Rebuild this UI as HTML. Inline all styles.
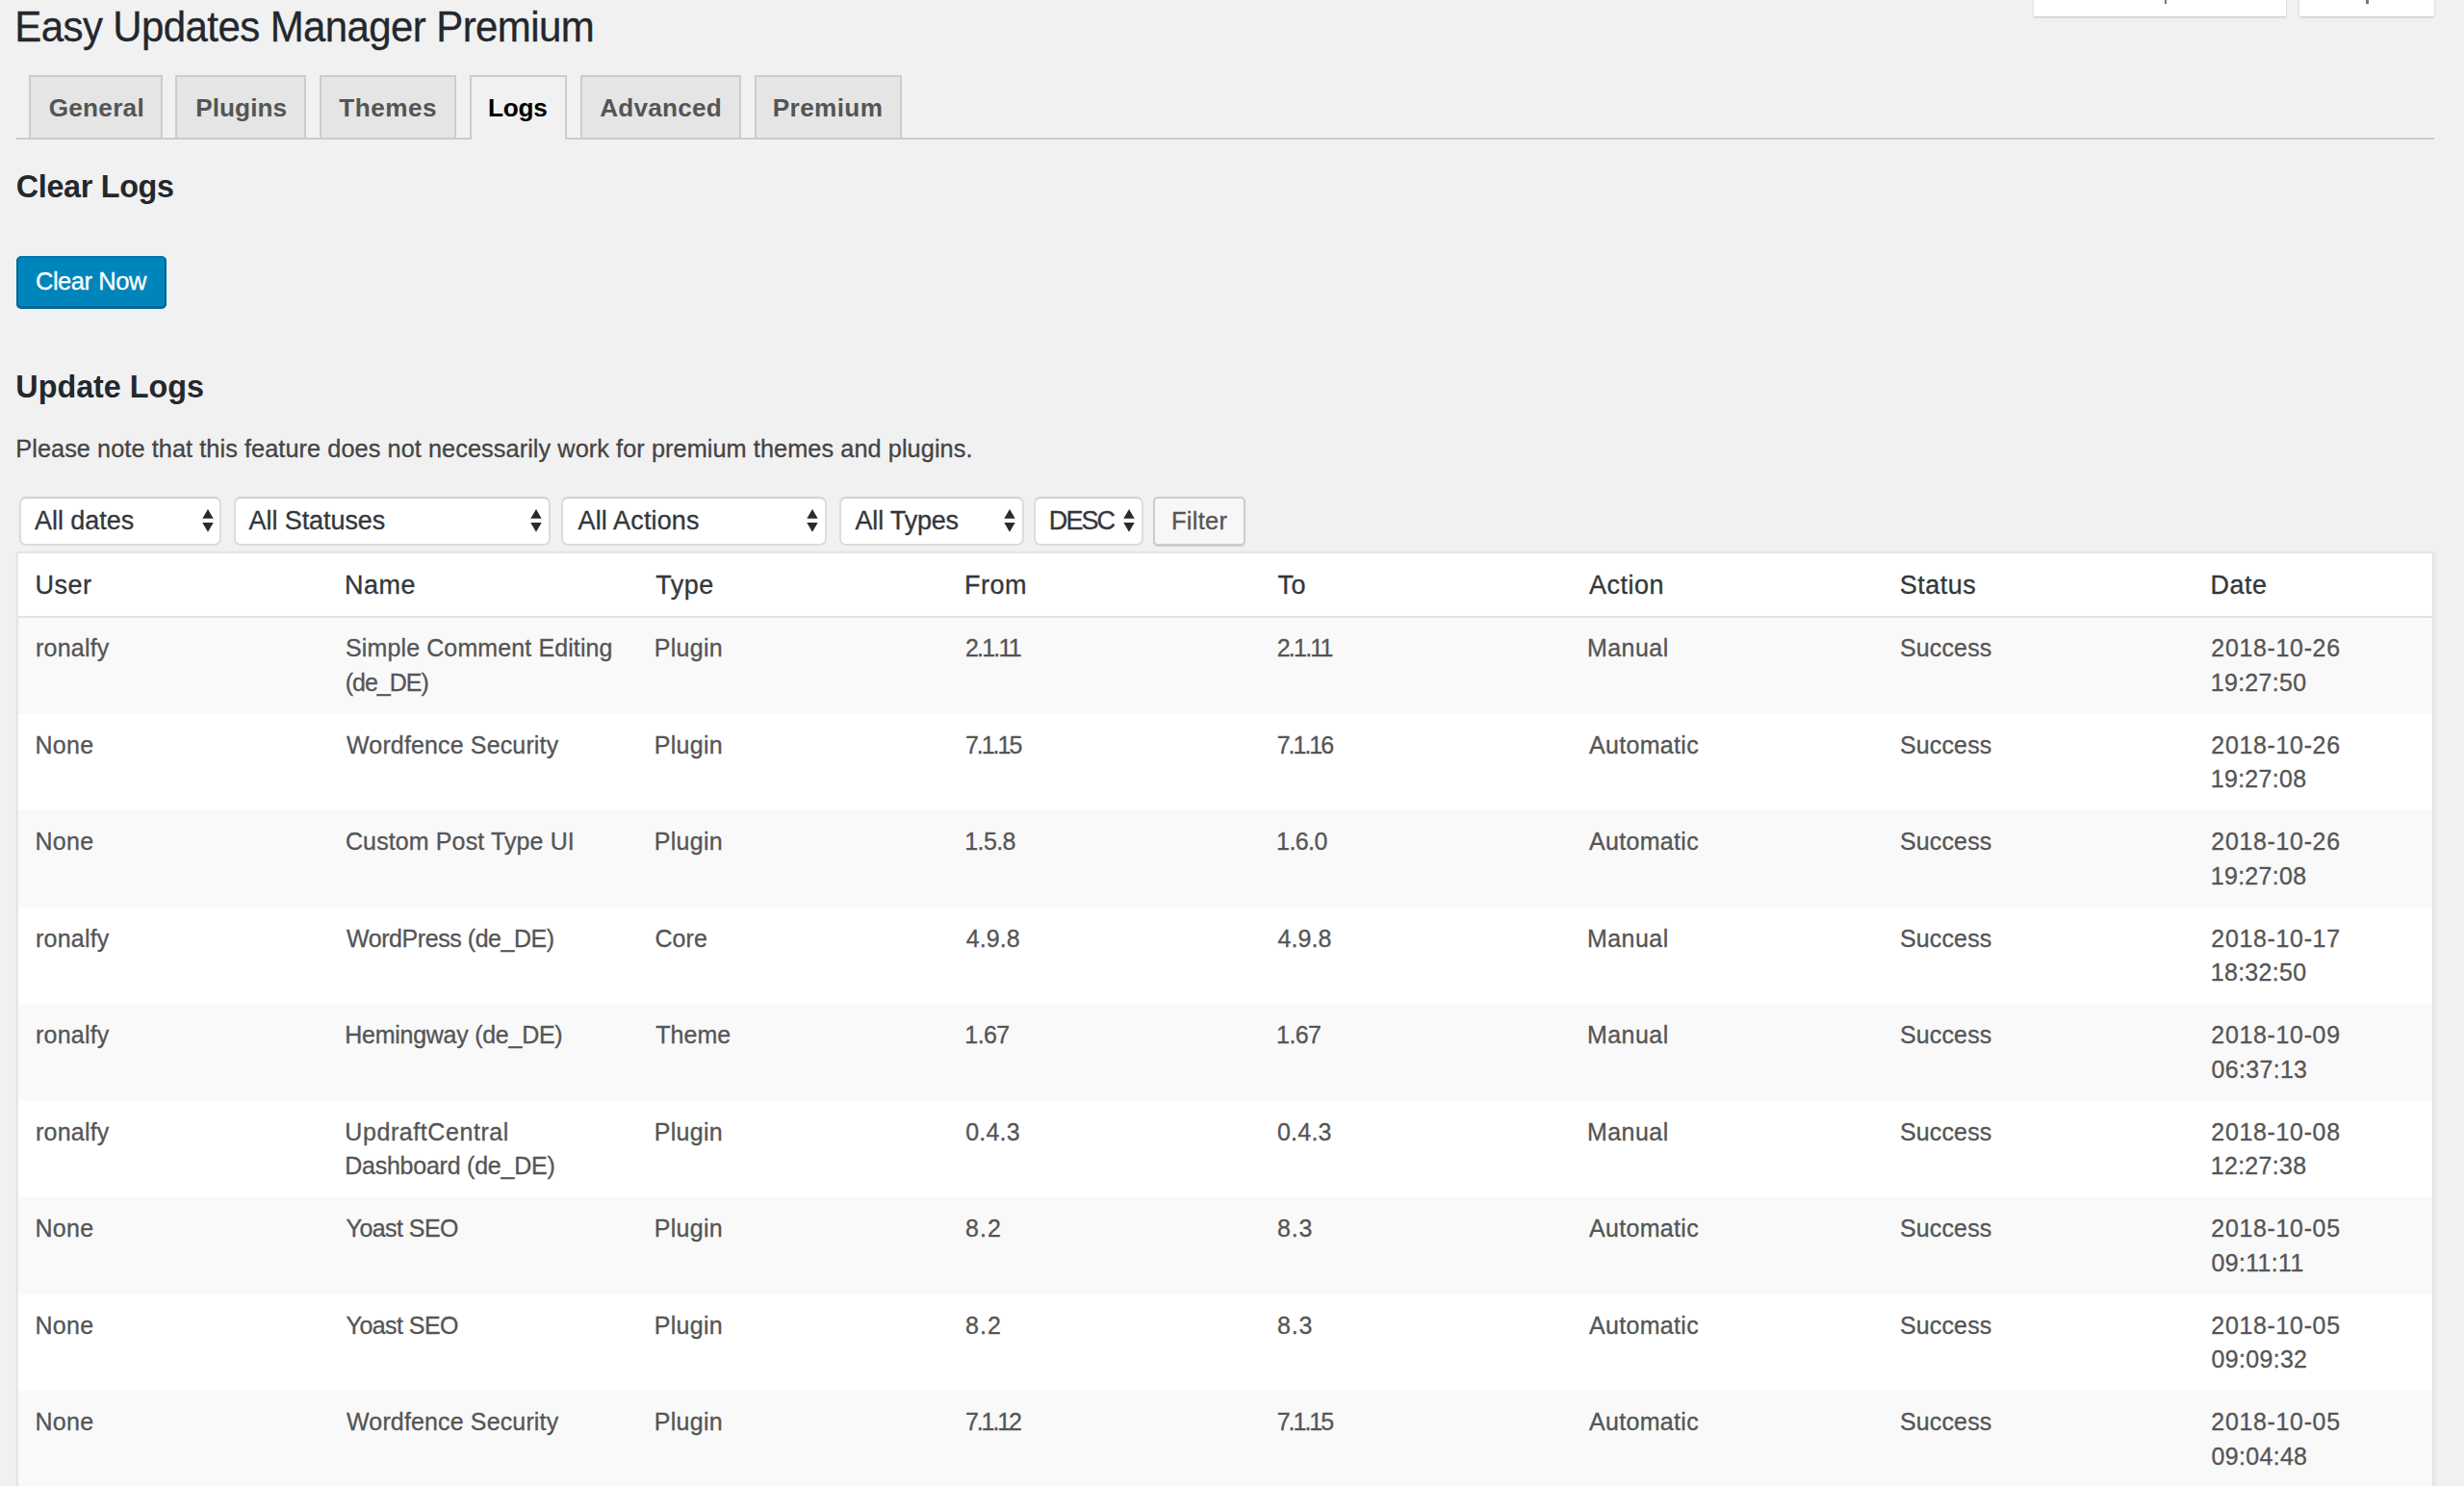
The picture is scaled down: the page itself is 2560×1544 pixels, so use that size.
<!DOCTYPE html>
<html><head><meta charset="utf-8"><title>Easy Updates Manager Premium</title>
<style>
*{margin:0;padding:0;box-sizing:border-box}
html,body{width:2560px;height:1544px;overflow:hidden;background:#f1f1f1;font-family:"Liberation Sans",sans-serif;position:relative}
.t{position:absolute;white-space:nowrap;-webkit-text-stroke:0.3px currentColor}
.b{position:absolute}
.arr{position:absolute}
.meta{position:absolute;top:-20px;height:37px;background:#fff;box-shadow:0 1px 2px rgba(0,0,0,.2)}
.navline{position:absolute;left:16.5px;top:143px;width:2512px;height:2px;background:#ccc}
.tab{position:absolute;top:78px;height:65px;border:2px solid #ccc;border-bottom:none;background:#e5e5e5}
.tab.active{background:#f1f1f1;height:67px}
.btn{position:absolute;left:17px;top:266px;width:156px;height:54px;background:#0085ba;border:2px solid #0073aa;border-color:#0073aa #006799 #006799;border-radius:5px;box-shadow:0 1px 0 #006799}
.sel{position:absolute;top:516px;height:50.5px;background:#fff;border:2px solid #dcdcdc;border-top-color:#d2d2d2;border-radius:7px;box-shadow:inset 0 1px 1px rgba(0,0,0,.04)}
.fbtn{position:absolute;left:1198px;top:516px;width:96px;height:51px;background:#f7f7f7;border:2px solid #ccc;border-radius:5px;box-shadow:0 1px 0 #ccc}
.table{position:absolute;left:16.5px;top:573px;width:2512px;height:1000px;background:#fff;border:2px solid #e5e5e5;box-shadow:0 1px 2px rgba(0,0,0,.04),2px 0 5px rgba(0,0,0,.035)}
.hdrline{position:absolute;left:18.5px;top:639.5px;width:2508px;height:2px;background:#e1e1e1}
.stripe{position:absolute;left:18.5px;width:2508px;background:#f9f9f9}
</style></head><body>

<div class="meta" style="left:2112.5px;width:262px"></div>
<div class="meta" style="left:2388.5px;width:140px"></div>
<div class="b" style="left:2248.5px;top:0;width:2.5px;height:4px;background:#777"></div>
<div class="b" style="left:2458px;top:0;width:2.5px;height:4px;background:#777"></div>
<div class="t" style="left:15.34px;top:0.65px;font-size:42px;line-height:55px;color:#23282d;letter-spacing:-0.603px;transform:scaleY(1.06);transform-origin:0 42px;">Easy Updates Manager Premium</div>
<div class="navline"></div>
<div class="tab" style="left:30.0px;width:139.0px"></div>
<div class="t" style="left:50.65px;top:94.72px;font-size:26.2px;line-height:34px;color:#555;font-weight:bold;-webkit-text-stroke:0;letter-spacing:0.248px;">General</div>
<div class="tab" style="left:182.0px;width:136.0px"></div>
<div class="t" style="left:203.20px;top:94.72px;font-size:26.2px;line-height:34px;color:#555;font-weight:bold;-webkit-text-stroke:0;letter-spacing:0.062px;">Plugins</div>
<div class="tab" style="left:331.6px;width:142.1px"></div>
<div class="t" style="left:352.34px;top:94.72px;font-size:26.2px;line-height:34px;color:#555;font-weight:bold;-webkit-text-stroke:0;letter-spacing:0.475px;">Themes</div>
<div class="tab active" style="left:488.0px;width:101.0px"></div>
<div class="t" style="left:507.00px;top:94.72px;font-size:26.2px;line-height:34px;color:#000;font-weight:bold;-webkit-text-stroke:0;letter-spacing:-0.256px;">Logs</div>
<div class="tab" style="left:603.4px;width:166.3px"></div>
<div class="t" style="left:623.25px;top:94.72px;font-size:26.2px;line-height:34px;color:#555;font-weight:bold;-webkit-text-stroke:0;letter-spacing:0.203px;">Advanced</div>
<div class="tab" style="left:783.6px;width:153.4px"></div>
<div class="t" style="left:802.80px;top:94.72px;font-size:26.2px;line-height:34px;color:#555;font-weight:bold;-webkit-text-stroke:0;letter-spacing:0.356px;">Premium</div>
<div class="t" style="left:16.71px;top:172.51px;font-size:32.3px;line-height:42px;color:#23282d;font-weight:bold;-webkit-text-stroke:0;letter-spacing:-0.294px;">Clear Logs</div>
<div class="btn"></div>
<div class="t" style="left:36.93px;top:275.76px;font-size:25.5px;line-height:33px;color:#fff;letter-spacing:-0.451px;">Clear Now</div>
<div class="t" style="left:16.36px;top:380.81px;font-size:32.3px;line-height:42px;color:#23282d;font-weight:bold;-webkit-text-stroke:0;">Update Logs</div>
<div class="t" style="left:16.28px;top:450.23px;font-size:25.3px;line-height:33px;color:#444;letter-spacing:0.066px;">Please note that this feature does not necessarily work for premium themes and plugins.</div>
<div class="sel" style="left:20.0px;width:210.4px"></div>
<div class="t" style="left:36.00px;top:523.74px;font-size:27px;line-height:35px;color:#32373c;letter-spacing:-0.037px;">All dates</div>
<svg class="arr" style="left:209.7px;top:528px" width="12" height="26" viewBox="0 0 12 26"><path d="M6 1.1 L11.7 10.7 L0.3 10.7 Z M0.3 15.1 L11.7 15.1 L6 24.8 Z" fill="#2a2a2a"/></svg>
<div class="sel" style="left:242.8px;width:329.7px"></div>
<div class="t" style="left:258.60px;top:523.74px;font-size:27px;line-height:35px;color:#32373c;letter-spacing:-0.083px;">All Statuses</div>
<svg class="arr" style="left:551.4px;top:528px" width="12" height="26" viewBox="0 0 12 26"><path d="M6 1.1 L11.7 10.7 L0.3 10.7 Z M0.3 15.1 L11.7 15.1 L6 24.8 Z" fill="#2a2a2a"/></svg>
<div class="sel" style="left:583.3px;width:275.7px"></div>
<div class="t" style="left:600.50px;top:523.74px;font-size:27px;line-height:35px;color:#32373c;letter-spacing:0.144px;">All Actions</div>
<svg class="arr" style="left:838.4px;top:528px" width="12" height="26" viewBox="0 0 12 26"><path d="M6 1.1 L11.7 10.7 L0.3 10.7 Z M0.3 15.1 L11.7 15.1 L6 24.8 Z" fill="#2a2a2a"/></svg>
<div class="sel" style="left:871.6px;width:192.1px"></div>
<div class="t" style="left:888.50px;top:523.74px;font-size:27px;line-height:35px;color:#32373c;letter-spacing:-0.179px;">All Types</div>
<svg class="arr" style="left:1042.9px;top:528px" width="12" height="26" viewBox="0 0 12 26"><path d="M6 1.1 L11.7 10.7 L0.3 10.7 Z M0.3 15.1 L11.7 15.1 L6 24.8 Z" fill="#2a2a2a"/></svg>
<div class="sel" style="left:1074.3px;width:113.9px"></div>
<div class="t" style="left:1089.84px;top:523.74px;font-size:27px;line-height:35px;color:#32373c;letter-spacing:-1.907px;">DESC</div>
<svg class="arr" style="left:1167.4px;top:528px" width="12" height="26" viewBox="0 0 12 26"><path d="M6 1.1 L11.7 10.7 L0.3 10.7 Z M0.3 15.1 L11.7 15.1 L6 24.8 Z" fill="#2a2a2a"/></svg>
<div class="fbtn"></div>
<div class="t" style="left:1216.96px;top:524.86px;font-size:25.5px;line-height:33px;color:#555;letter-spacing:0.283px;">Filter</div>
<div class="table"></div>
<div class="stripe" style="top:641.0px;height:100.5px"></div>
<div class="stripe" style="top:842.0px;height:100.5px"></div>
<div class="stripe" style="top:1043.0px;height:100.5px"></div>
<div class="stripe" style="top:1244.0px;height:100.5px"></div>
<div class="stripe" style="top:1445.0px;height:100.5px"></div>
<div class="hdrline"></div>
<div class="t" style="left:36.58px;top:590.84px;font-size:27px;line-height:35px;color:#32373c;letter-spacing:0.500px;">User</div>
<div class="t" style="left:358.04px;top:590.84px;font-size:27px;line-height:35px;color:#32373c;letter-spacing:0.500px;">Name</div>
<div class="t" style="left:681.26px;top:590.84px;font-size:27px;line-height:35px;color:#32373c;letter-spacing:0.500px;">Type</div>
<div class="t" style="left:1002.04px;top:590.84px;font-size:27px;line-height:35px;color:#32373c;letter-spacing:0.500px;">From</div>
<div class="t" style="left:1327.46px;top:590.84px;font-size:27px;line-height:35px;color:#32373c;letter-spacing:0.500px;">To</div>
<div class="t" style="left:1651.00px;top:590.84px;font-size:27px;line-height:35px;color:#32373c;letter-spacing:0.500px;">Action</div>
<div class="t" style="left:1973.79px;top:590.84px;font-size:27px;line-height:35px;color:#32373c;letter-spacing:0.500px;">Status</div>
<div class="t" style="left:2296.44px;top:590.84px;font-size:27px;line-height:35px;color:#32373c;letter-spacing:0.500px;">Date</div>
<div class="t" style="left:36.98px;top:656.39px;font-size:25px;line-height:35.5px;color:#555;letter-spacing:0.221px;">ronalfy</div>
<div class="t" style="left:359.07px;top:656.39px;font-size:25px;line-height:35.5px;color:#555;letter-spacing:0.111px;">Simple Comment Editing</div>
<div class="t" style="left:358.70px;top:691.69px;font-size:25px;line-height:35.5px;color:#555;letter-spacing:-1.000px;">(de_DE)</div>
<div class="t" style="left:679.80px;top:656.39px;font-size:25px;line-height:35.5px;color:#555;letter-spacing:0.265px;">Plugin</div>
<div class="t" style="left:1002.95px;top:656.39px;font-size:25px;line-height:35.5px;color:#555;letter-spacing:-1.790px;">2.1.11</div>
<div class="t" style="left:1326.75px;top:656.39px;font-size:25px;line-height:35.5px;color:#555;letter-spacing:-1.790px;">2.1.11</div>
<div class="t" style="left:1649.00px;top:656.39px;font-size:25px;line-height:35.5px;color:#555;letter-spacing:0.445px;">Manual</div>
<div class="t" style="left:1973.88px;top:656.39px;font-size:25px;line-height:35.5px;color:#555;letter-spacing:0.167px;">Success</div>
<div class="t" style="left:2297.35px;top:656.39px;font-size:25px;line-height:35.5px;color:#555;letter-spacing:0.650px;">2018-10-26</div>
<div class="t" style="left:2296.72px;top:691.69px;font-size:25px;line-height:35.5px;color:#555;letter-spacing:0.300px;">19:27:50</div>
<div class="t" style="left:36.60px;top:756.89px;font-size:25px;line-height:35.5px;color:#555;letter-spacing:0.225px;">None</div>
<div class="t" style="left:360.07px;top:756.89px;font-size:25px;line-height:35.5px;color:#555;letter-spacing:0.140px;">Wordfence Security</div>
<div class="t" style="left:679.80px;top:756.89px;font-size:25px;line-height:35.5px;color:#555;letter-spacing:0.265px;">Plugin</div>
<div class="t" style="left:1002.95px;top:756.89px;font-size:25px;line-height:35.5px;color:#555;letter-spacing:-2.030px;">7.1.15</div>
<div class="t" style="left:1326.75px;top:756.89px;font-size:25px;line-height:35.5px;color:#555;letter-spacing:-2.030px;">7.1.16</div>
<div class="t" style="left:1651.00px;top:756.89px;font-size:25px;line-height:35.5px;color:#555;letter-spacing:0.312px;">Automatic</div>
<div class="t" style="left:1973.88px;top:756.89px;font-size:25px;line-height:35.5px;color:#555;letter-spacing:0.167px;">Success</div>
<div class="t" style="left:2297.35px;top:756.89px;font-size:25px;line-height:35.5px;color:#555;letter-spacing:0.650px;">2018-10-26</div>
<div class="t" style="left:2296.72px;top:792.19px;font-size:25px;line-height:35.5px;color:#555;letter-spacing:0.300px;">19:27:08</div>
<div class="t" style="left:36.60px;top:857.39px;font-size:25px;line-height:35.5px;color:#555;letter-spacing:0.225px;">None</div>
<div class="t" style="left:358.95px;top:857.39px;font-size:25px;line-height:35.5px;color:#555;letter-spacing:0.115px;">Custom Post Type UI</div>
<div class="t" style="left:679.80px;top:857.39px;font-size:25px;line-height:35.5px;color:#555;letter-spacing:0.265px;">Plugin</div>
<div class="t" style="left:1002.33px;top:857.39px;font-size:25px;line-height:35.5px;color:#555;letter-spacing:-0.613px;">1.5.8</div>
<div class="t" style="left:1326.12px;top:857.39px;font-size:25px;line-height:35.5px;color:#555;letter-spacing:-0.594px;">1.6.0</div>
<div class="t" style="left:1651.00px;top:857.39px;font-size:25px;line-height:35.5px;color:#555;letter-spacing:0.312px;">Automatic</div>
<div class="t" style="left:1973.88px;top:857.39px;font-size:25px;line-height:35.5px;color:#555;letter-spacing:0.167px;">Success</div>
<div class="t" style="left:2297.35px;top:857.39px;font-size:25px;line-height:35.5px;color:#555;letter-spacing:0.650px;">2018-10-26</div>
<div class="t" style="left:2296.72px;top:892.69px;font-size:25px;line-height:35.5px;color:#555;letter-spacing:0.300px;">19:27:08</div>
<div class="t" style="left:36.98px;top:957.89px;font-size:25px;line-height:35.5px;color:#555;letter-spacing:0.221px;">ronalfy</div>
<div class="t" style="left:360.07px;top:957.89px;font-size:25px;line-height:35.5px;color:#555;letter-spacing:-0.444px;">WordPress (de_DE)</div>
<div class="t" style="left:680.55px;top:957.89px;font-size:25px;line-height:35.5px;color:#555;letter-spacing:0.017px;">Core</div>
<div class="t" style="left:1003.70px;top:957.89px;font-size:25px;line-height:35.5px;color:#555;letter-spacing:0.094px;">4.9.8</div>
<div class="t" style="left:1327.50px;top:957.89px;font-size:25px;line-height:35.5px;color:#555;letter-spacing:0.094px;">4.9.8</div>
<div class="t" style="left:1649.00px;top:957.89px;font-size:25px;line-height:35.5px;color:#555;letter-spacing:0.445px;">Manual</div>
<div class="t" style="left:1973.88px;top:957.89px;font-size:25px;line-height:35.5px;color:#555;letter-spacing:0.167px;">Success</div>
<div class="t" style="left:2297.35px;top:957.89px;font-size:25px;line-height:35.5px;color:#555;letter-spacing:0.650px;">2018-10-17</div>
<div class="t" style="left:2296.72px;top:993.19px;font-size:25px;line-height:35.5px;color:#555;letter-spacing:0.300px;">18:32:50</div>
<div class="t" style="left:36.98px;top:1058.39px;font-size:25px;line-height:35.5px;color:#555;letter-spacing:0.221px;">ronalfy</div>
<div class="t" style="left:358.20px;top:1058.39px;font-size:25px;line-height:35.5px;color:#555;letter-spacing:-0.258px;">Hemingway (de_DE)</div>
<div class="t" style="left:681.30px;top:1058.39px;font-size:25px;line-height:35.5px;color:#555;">Theme</div>
<div class="t" style="left:1002.33px;top:1058.39px;font-size:25px;line-height:35.5px;color:#555;letter-spacing:-0.600px;">1.67</div>
<div class="t" style="left:1326.12px;top:1058.39px;font-size:25px;line-height:35.5px;color:#555;letter-spacing:-0.600px;">1.67</div>
<div class="t" style="left:1649.00px;top:1058.39px;font-size:25px;line-height:35.5px;color:#555;letter-spacing:0.445px;">Manual</div>
<div class="t" style="left:1973.88px;top:1058.39px;font-size:25px;line-height:35.5px;color:#555;letter-spacing:0.167px;">Success</div>
<div class="t" style="left:2297.35px;top:1058.39px;font-size:25px;line-height:35.5px;color:#555;letter-spacing:0.650px;">2018-10-09</div>
<div class="t" style="left:2297.60px;top:1093.69px;font-size:25px;line-height:35.5px;color:#555;letter-spacing:0.300px;">06:37:13</div>
<div class="t" style="left:36.98px;top:1158.89px;font-size:25px;line-height:35.5px;color:#555;letter-spacing:0.221px;">ronalfy</div>
<div class="t" style="left:358.32px;top:1158.89px;font-size:25px;line-height:35.5px;color:#555;letter-spacing:0.577px;">UpdraftCentral</div>
<div class="t" style="left:358.20px;top:1194.19px;font-size:25px;line-height:35.5px;color:#555;letter-spacing:-0.234px;">Dashboard (de_DE)</div>
<div class="t" style="left:679.80px;top:1158.89px;font-size:25px;line-height:35.5px;color:#555;letter-spacing:0.265px;">Plugin</div>
<div class="t" style="left:1003.20px;top:1158.89px;font-size:25px;line-height:35.5px;color:#555;letter-spacing:0.219px;">0.4.3</div>
<div class="t" style="left:1327.00px;top:1158.89px;font-size:25px;line-height:35.5px;color:#555;letter-spacing:0.219px;">0.4.3</div>
<div class="t" style="left:1649.00px;top:1158.89px;font-size:25px;line-height:35.5px;color:#555;letter-spacing:0.445px;">Manual</div>
<div class="t" style="left:1973.88px;top:1158.89px;font-size:25px;line-height:35.5px;color:#555;letter-spacing:0.167px;">Success</div>
<div class="t" style="left:2297.35px;top:1158.89px;font-size:25px;line-height:35.5px;color:#555;letter-spacing:0.650px;">2018-10-08</div>
<div class="t" style="left:2296.72px;top:1194.19px;font-size:25px;line-height:35.5px;color:#555;letter-spacing:0.300px;">12:27:38</div>
<div class="t" style="left:36.60px;top:1259.39px;font-size:25px;line-height:35.5px;color:#555;letter-spacing:0.225px;">None</div>
<div class="t" style="left:359.57px;top:1259.39px;font-size:25px;line-height:35.5px;color:#555;letter-spacing:-0.562px;">Yoast SEO</div>
<div class="t" style="left:679.80px;top:1259.39px;font-size:25px;line-height:35.5px;color:#555;letter-spacing:0.265px;">Plugin</div>
<div class="t" style="left:1003.08px;top:1259.39px;font-size:25px;line-height:35.5px;color:#555;letter-spacing:1.062px;">8.2</div>
<div class="t" style="left:1326.88px;top:1259.39px;font-size:25px;line-height:35.5px;color:#555;letter-spacing:0.938px;">8.3</div>
<div class="t" style="left:1651.00px;top:1259.39px;font-size:25px;line-height:35.5px;color:#555;letter-spacing:0.312px;">Automatic</div>
<div class="t" style="left:1973.88px;top:1259.39px;font-size:25px;line-height:35.5px;color:#555;letter-spacing:0.167px;">Success</div>
<div class="t" style="left:2297.35px;top:1259.39px;font-size:25px;line-height:35.5px;color:#555;letter-spacing:0.650px;">2018-10-05</div>
<div class="t" style="left:2297.60px;top:1294.69px;font-size:25px;line-height:35.5px;color:#555;letter-spacing:0.300px;">09:11:11</div>
<div class="t" style="left:36.60px;top:1359.89px;font-size:25px;line-height:35.5px;color:#555;letter-spacing:0.225px;">None</div>
<div class="t" style="left:359.57px;top:1359.89px;font-size:25px;line-height:35.5px;color:#555;letter-spacing:-0.562px;">Yoast SEO</div>
<div class="t" style="left:679.80px;top:1359.89px;font-size:25px;line-height:35.5px;color:#555;letter-spacing:0.265px;">Plugin</div>
<div class="t" style="left:1003.08px;top:1359.89px;font-size:25px;line-height:35.5px;color:#555;letter-spacing:1.062px;">8.2</div>
<div class="t" style="left:1326.88px;top:1359.89px;font-size:25px;line-height:35.5px;color:#555;letter-spacing:0.938px;">8.3</div>
<div class="t" style="left:1651.00px;top:1359.89px;font-size:25px;line-height:35.5px;color:#555;letter-spacing:0.312px;">Automatic</div>
<div class="t" style="left:1973.88px;top:1359.89px;font-size:25px;line-height:35.5px;color:#555;letter-spacing:0.167px;">Success</div>
<div class="t" style="left:2297.35px;top:1359.89px;font-size:25px;line-height:35.5px;color:#555;letter-spacing:0.650px;">2018-10-05</div>
<div class="t" style="left:2297.60px;top:1395.19px;font-size:25px;line-height:35.5px;color:#555;letter-spacing:0.300px;">09:09:32</div>
<div class="t" style="left:36.60px;top:1460.39px;font-size:25px;line-height:35.5px;color:#555;letter-spacing:0.225px;">None</div>
<div class="t" style="left:360.07px;top:1460.39px;font-size:25px;line-height:35.5px;color:#555;letter-spacing:0.140px;">Wordfence Security</div>
<div class="t" style="left:679.80px;top:1460.39px;font-size:25px;line-height:35.5px;color:#555;letter-spacing:0.265px;">Plugin</div>
<div class="t" style="left:1002.95px;top:1460.39px;font-size:25px;line-height:35.5px;color:#555;letter-spacing:-2.100px;">7.1.12</div>
<div class="t" style="left:1326.75px;top:1460.39px;font-size:25px;line-height:35.5px;color:#555;letter-spacing:-2.030px;">7.1.15</div>
<div class="t" style="left:1651.00px;top:1460.39px;font-size:25px;line-height:35.5px;color:#555;letter-spacing:0.312px;">Automatic</div>
<div class="t" style="left:1973.88px;top:1460.39px;font-size:25px;line-height:35.5px;color:#555;letter-spacing:0.167px;">Success</div>
<div class="t" style="left:2297.35px;top:1460.39px;font-size:25px;line-height:35.5px;color:#555;letter-spacing:0.650px;">2018-10-05</div>
<div class="t" style="left:2297.60px;top:1495.69px;font-size:25px;line-height:35.5px;color:#555;letter-spacing:0.300px;">09:04:48</div>
</body></html>
